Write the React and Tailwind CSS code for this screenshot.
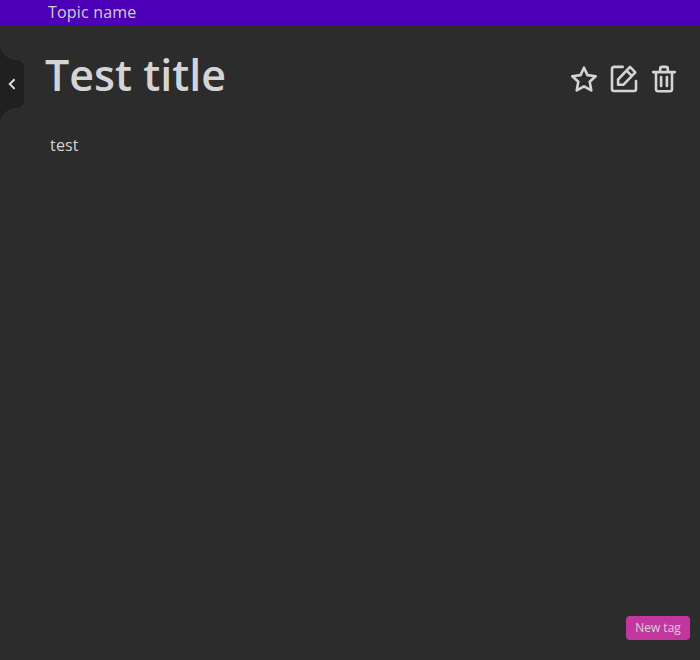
const iconProps = {
  viewBox: "0 0 32 32",
  fill: "none",
  stroke: "currentColor",
  strokeWidth: 2.6,
  strokeLinecap: "round",
  strokeLinejoin: "round",
  className: "size-8",
};

function StarIcon() {
  return (
    <svg {...iconProps}>
      <path d="M16 3.7L19.5 11.1L27.7 12.2L21.7 17.8L23.3 26.4L16 22.3L8.7 26.4L10.3 17.8L4.3 12.2L12.5 11.1Z" />
    </svg>
  );
}

function EditIcon() {
  return (
    <svg {...iconProps}>
      <path d="M14.7 2.9H6A2 2 0 0 0 4 4.9V25A2 2 0 0 0 6 27H26A2 2 0 0 0 28 25V17" />
      <path d="M10.1 20.8V15.5L22 2.9L27.3 8.3L15.3 20.8ZM18.6 6.6L23.7 11.8" />
    </svg>
  );
}

function TrashIcon() {
  return (
    <svg {...iconProps}>
      <path d="M5.2 8.1H26.8M8 8.1V25A2.2 2.2 0 0 0 10.2 27.2H21.8A2.2 2.2 0 0 0 24 25V8.1M12.2 8V4.9A2 2 0 0 1 14.2 2.9H17.8A2 2 0 0 1 19.8 4.9V8M13.1 13V22M18.9 13V22" />
    </svg>
  );
}

function CollapseHandle() {
  return (
    <button className="mt-[23px] h-[72px] w-6 shrink-0" aria-label="Collapse">
      <svg viewBox="0 0 24 72" className="block h-[72px] w-6 overflow-visible">
        <path
          d="M0 -4A16 16 0 0 0 16 12A8 8 0 0 1 24 20V52A8 8 0 0 1 16 60A16 16 0 0 0 0 76Z"
          fill="#202020"
        />
        <path d="M14.6 31.3L9.8 36.1L14.6 40.9" fill="none" stroke="#dedede" strokeWidth="2" />
      </svg>
    </button>
  );
}

export default function App() {
  return (
    <div className="flex h-screen flex-col bg-[#2c2c2c] font-['Open_Sans',sans-serif] text-[#d4d4d4]">
      <header className="h-[25px] shrink-0 bg-[#4d00b8] pl-12 text-base leading-[25px] tracking-[0.18px] text-[#cfcfcf]">
        Topic name
      </header>
      <div className="flex min-h-0 flex-1">
        <CollapseHandle />
        <main className="flex flex-1 flex-col pl-[21px]">
          <div className="flex h-[100px] justify-between pr-5">
            <h1 className="pt-5 text-[43px] leading-[60px] font-semibold">Test title</h1>
            <div className="flex gap-2 pt-[39px]">
              <StarIcon />
              <EditIcon />
              <TrashIcon />
            </div>
          </div>
          <p className="pt-2 pl-[5px] text-base tracking-[0.18px]">test</p>
          <footer className="mt-auto flex justify-end pr-2.5 pb-5">
            <button className="h-6 w-16 rounded bg-[#c2379f] text-xs leading-6">New tag</button>
          </footer>
        </main>
      </div>
    </div>
  );
}
